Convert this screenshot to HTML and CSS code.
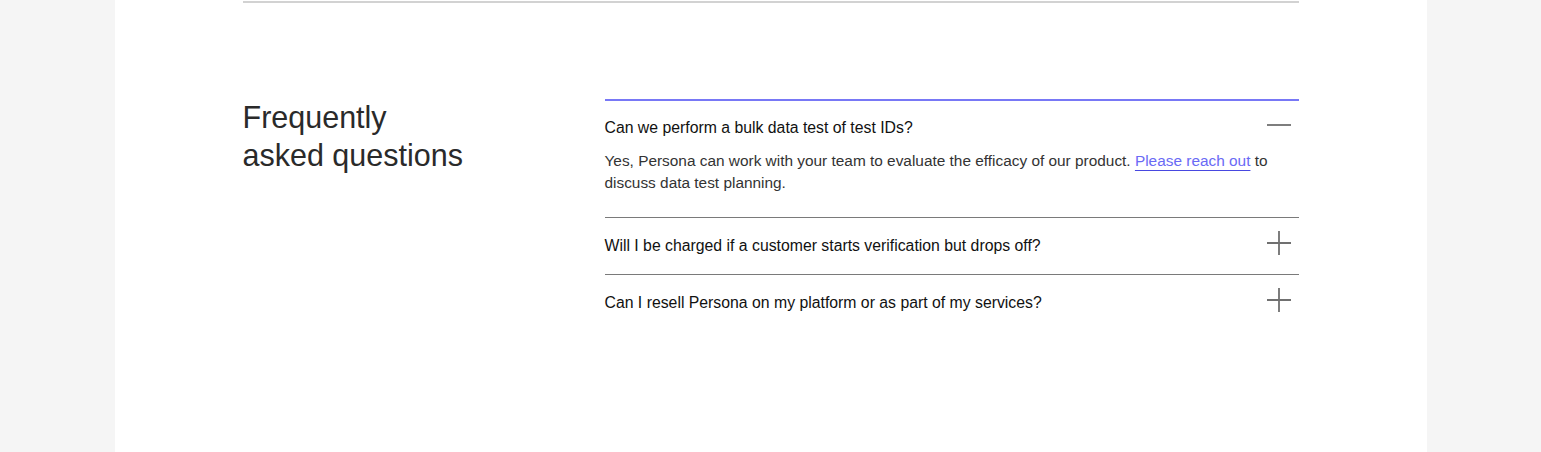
FILE: index.html
```html
<!DOCTYPE html>
<html lang="en">
<head>
<meta charset="utf-8">
<title>FAQ</title>
<link rel="stylesheet" href="styles.css">
</head>
<body>
<main class="panel">
  <div class="top-rule"></div>
  <section class="faq">
    <h2 class="faq-title">Frequently<br>asked questions</h2>
    <div class="faq-list">
      <div class="faq-item open">
        <div class="faq-q">
          <span class="faq-q-text">Can we perform a bulk data test of test IDs?</span>
          <svg class="faq-icon" viewBox="0 0 24 24" width="24" height="24" aria-hidden="true"><path d="M0 12H24" /></svg>
        </div>
        <p class="faq-a">Yes, Persona can work with your team to evaluate the efficacy of our product. <a href="#" class="faq-link">Please reach out</a> to discuss data test planning.</p>
      </div>
      <div class="faq-item">
        <div class="faq-q">
          <span class="faq-q-text">Will I be charged if a customer starts verification but drops off?</span>
          <svg class="faq-icon" viewBox="0 0 24 24" width="24" height="24" aria-hidden="true"><path d="M0 12H24M12 0V24" /></svg>
        </div>
      </div>
      <div class="faq-item">
        <div class="faq-q">
          <span class="faq-q-text">Can I resell Persona on my platform or as part of my services?</span>
          <svg class="faq-icon" viewBox="0 0 24 24" width="24" height="24" aria-hidden="true"><path d="M0 12H24M12 0V24" /></svg>
        </div>
      </div>
    </div>
  </section>
</main>
</body>
</html>
```
FILE: styles.css
```css
html, body {
  margin: 0;
  padding: 0;
}
body {
  background: #f5f5f5;
  font-family: "Liberation Sans", Arial, sans-serif;
  color: #111;
}
.panel {
  max-width: 1312px;
  margin: 0 auto;
  background: #fff;
  padding: 1px 128px 0;
  box-sizing: border-box;
  min-height: 452px;
}
.top-rule {
  height: 2px;
  background: #d2d2d2;
}
.faq {
  display: grid;
  grid-template-columns: 362px 1fr;
  padding-top: 96px;
}
.faq-title {
  margin: -1px 0 0;
  font-size: 30.5px;
  line-height: 38px;
  font-weight: 400;
  color: #2a2a2a;
}
.faq-list {
  display: flex;
  flex-direction: column;
}
.faq-item {
  border-top: 1px solid #7a7a7a;
}
.faq-item.open {
  border-top: 2px solid #7878f6;
}
.faq-q {
  display: flex;
  align-items: center;
  justify-content: space-between;
  padding: 18px 0;
  font-size: 15.8px;
  line-height: 20px;
  color: #111;
}
.faq-item.open .faq-q {
  padding-top: 17px;
  padding-bottom: 12px;
}
.faq-icon {
  flex: none;
  margin: -6px 8px 0 0;
  fill: none;
  stroke: #707070;
  stroke-width: 1.8;
}
.faq-a {
  margin: 0;
  padding: 0 0 23px;
  font-size: 15.4px;
  line-height: 22px;
  color: #333;
}
.faq-link {
  color: #6a6af5;
  text-decoration: underline;
  text-decoration-color: #4848e0;
  text-underline-offset: 4px;
  text-decoration-thickness: 1px;
}
```
